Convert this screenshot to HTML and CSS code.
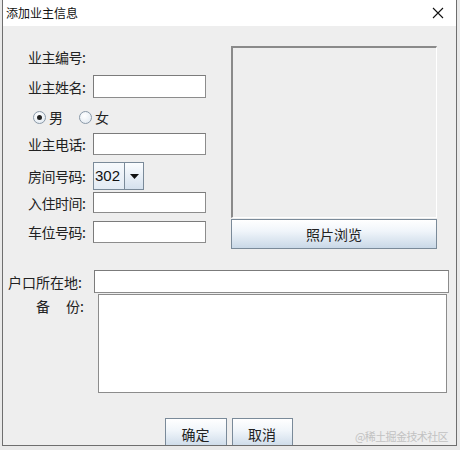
FILE: index.html
```html
<!DOCTYPE html>
<html lang="zh">
<head>
<meta charset="utf-8">
<title>添加业主信息</title>
<link rel="stylesheet" href="styles.css">
</head>
<body>
<div class="win">
  <div class="titlebar">
    <span class="title">添加业主信息</span>
    <svg class="close" width="12" height="12" viewBox="0 0 12 12"><path d="M1 1L11 11M11 1L1 11" stroke="#111" stroke-width="1.1" fill="none"/></svg>
  </div>
  <div class="content">
    <div class="top">
      <div class="form">
        <div class="row r1"><span class="lbl">业主编号:</span></div>
        <div class="row r2"><span class="lbl">业主姓名:</span><span class="field"></span></div>
        <div class="row r3">
          <span class="radio checked"></span><span class="rtext">男</span>
          <span class="radio"></span><span class="rtext">女</span>
        </div>
        <div class="row r4"><span class="lbl">业主电话:</span><span class="field"></span></div>
        <div class="row r5"><span class="lbl">房间号码:</span>
          <span class="combo"><span class="combo-val">302</span><span class="combo-arrow"><svg width="9" height="5" viewBox="0 0 9 5"><path d="M0 0H9L4.5 5Z" fill="#111"/></svg></span></span>
        </div>
        <div class="row r6"><span class="lbl">入住时间:</span><span class="field"></span></div>
        <div class="row r7"><span class="lbl">车位号码:</span><span class="field"></span></div>
      </div>
      <div class="photo">
        <div class="photo-box"></div>
        <div class="btn btn-photo">照片浏览</div>
      </div>
    </div>
    <div class="addr">
      <span class="lbl-wide">户口所在地:</span><span class="field field-wide"></span>
    </div>
    <div class="note">
      <span class="lbl-note"><span>备</span><span>份:</span></span><span class="textarea"></span>
    </div>
    <div class="actions">
      <div class="btn btn-ok">确定</div>
      <div class="btn btn-cancel">取消</div>
    </div>
    <div class="watermark">@稀土掘金技术社区</div>
  </div>
</div>
</body>
</html>
```
FILE: styles.css
```css
html, body {
  margin: 0;
  padding: 0;
  background: #e9e9e9;
}
body {
  width: 460px;
  height: 450px;
  overflow: hidden;
  font-family: "Noto Sans CJK SC", "Liberation Sans", sans-serif;
  color: #222;
}
.win {
  margin-left: 2px;
  width: 455px;
  height: 446px;
  box-sizing: border-box;
  border: 1px solid #6e6e6e;
  border-top: none;
  background: #eeeeee;
  overflow: hidden;
  display: flex;
  flex-direction: column;
}
.titlebar {
  height: 26px;
  flex: none;
  background: #ffffff;
  display: flex;
  align-items: center;
  justify-content: space-between;
  padding: 0 12px 0 3px;
}
.title {
  font-size: 12px;
  line-height: 14px;
  color: #111;
}
.close { display: block; }
.content {
  position: relative;
  flex: 1;
  display: flex;
  flex-direction: column;
}
.top {
  display: flex;
  padding-top: 20px;
  padding-left: 25px;
  gap: 25px;
}
.form {
  display: flex;
  flex-direction: column;
  width: 178px;
}
.row {
  display: flex;
  align-items: center;
  gap: 5px;
}
.r1 { height: 22px; }
.r2 { height: 23px; margin-top: 7px; }
.r3 { height: 20px; margin-top: 9px; gap: 0; padding-left: 5px; }
.r4 { height: 22px; margin-top: 6px; }
.r5 { height: 28px; margin-top: 7px; }
.r6 { height: 21px; margin-top: 2px; }
.r7 { height: 22px; margin-top: 8px; }
.lbl {
  width: 60px;
  font-size: 14px;
  line-height: 16px;
  white-space: nowrap;
  letter-spacing: -0.5px;
  color: #222;
}
.field {
  width: 113px;
  height: 100%;
  box-sizing: border-box;
  background: #fff;
  border: 1px solid #8c8c8c;
  border-top-color: #7b7b7b;
  border-left-color: #7b7b7b;
}
.radio {
  width: 13px;
  height: 13px;
  box-sizing: border-box;
  border-radius: 50%;
  border: 1px solid #8a99a8;
  background: radial-gradient(circle at 40% 35%, #ffffff 0%, #dde6ef 100%);
  position: relative;
}
.radio.checked::after {
  content: "";
  position: absolute;
  left: 3px;
  top: 3px;
  width: 5px;
  height: 5px;
  border-radius: 50%;
  background: #222;
}
.rtext {
  font-size: 14px;
  line-height: 16px;
  margin-left: 3px;
  margin-right: 16px;
}
.combo {
  display: flex;
  width: 51px;
  height: 100%;
  box-sizing: border-box;
  border: 1px solid #7a8a99;
  background: linear-gradient(#f6f9fc, #e3ebf4);
}
.combo-val {
  flex: 1;
  font-family: "Liberation Sans", Arial, sans-serif;
  font-size: 15px;
  line-height: 26px;
  padding-left: 1px;
  color: #111;
}
.combo-arrow {
  width: 18px;
  border-left: 1px solid #7a8a99;
  display: flex;
  align-items: center;
  justify-content: center;
  background: linear-gradient(#fbfdff, #d5e1ee);
}
.combo-arrow svg { display: block; }
.photo {
  width: 206px;
  display: flex;
  flex-direction: column;
}
.photo-box {
  height: 172px;
  box-sizing: border-box;
  border: 1px solid #ffffff;
  border-top: 2px solid #8a8a8a;
  border-left: 2px solid #8a8a8a;
  background: #eeeeee;
}
.btn {
  box-sizing: border-box;
  border: 1px solid #7a8a99;
  background: linear-gradient(#ffffff 0%, #f0f5fa 40%, #c9d8e7 100%);
  display: flex;
  align-items: center;
  justify-content: center;
  font-size: 14px;
  color: #222;
}
.btn-photo {
  height: 30px;
  margin-top: 1px;
}
.addr {
  display: flex;
  align-items: center;
  margin-top: 21px;
  padding-left: 5px;
  height: 23px;
}
.lbl-wide {
  width: 86px;
  font-size: 14px;
  line-height: 16px;
  white-space: nowrap;
}
.field-wide {
  width: 355px;
  height: 23px;
}
.note {
  display: flex;
  align-items: flex-start;
  margin-top: 1px;
}
.lbl-note {
  width: 95px;
  padding-left: 33px;
  box-sizing: border-box;
  display: flex;
  gap: 16px;
  font-size: 14px;
  line-height: 16px;
  margin-top: 4px;
}
.textarea {
  width: 349px;
  height: 99px;
  box-sizing: border-box;
  background: #fff;
  border: 1px solid #8c8c8c;
}
.actions {
  display: flex;
  justify-content: center;
  gap: 5px;
  margin-top: 25px;
  padding-right: 2px;
}
.btn-ok { width: 62px; height: 31px; }
.btn-cancel { width: 61px; height: 31px; }
.watermark {
  position: absolute;
  right: 8px;
  bottom: 6px;
  font-size: 11px;
  line-height: 13px;
  color: #c2c2c2;
  letter-spacing: -0.6px;
}
```
